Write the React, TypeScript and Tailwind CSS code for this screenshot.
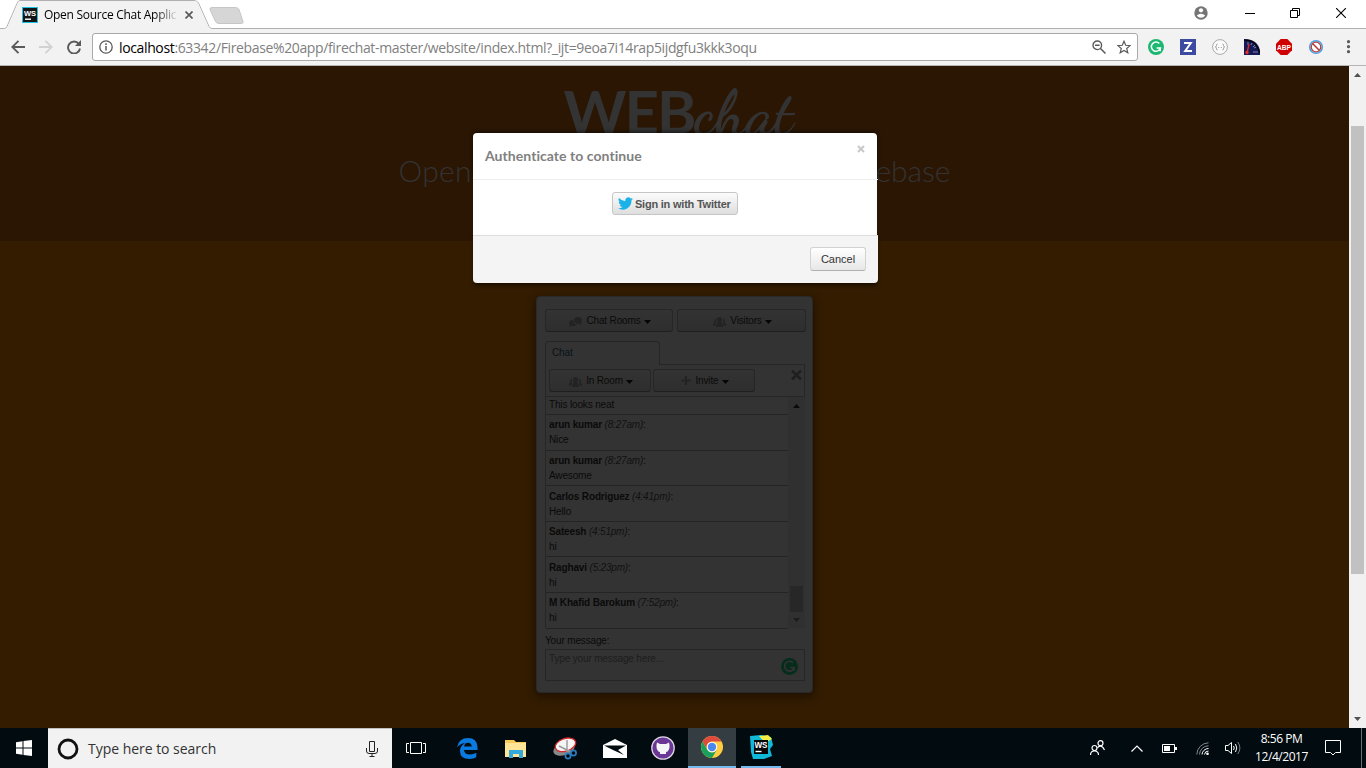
import type { ReactNode } from "react";

const UI = "font-['Open_Sans','Noto_Sans',sans-serif]";
const ARIAL = "font-['Liberation_Sans',Arial,sans-serif]";

function WebStormTab() {
  return (
    <svg width="16" height="16" viewBox="0 0 16 16">
      <rect width="16" height="16" fill="#1fc1e0" />
      <rect x="1" y="1" width="14" height="14" fill="#141414" />
      <text x="8" y="8.6" fontSize="7.5" fontWeight="700" textAnchor="middle" fill="#fff" fontFamily="Liberation Sans">WS</text>
      <rect x="3" y="11.5" width="6" height="1.4" fill="#fff" />
    </svg>
  );
}

function Grammarly({ size, bg, fg }: { size: number; bg: string; fg: string }) {
  return (
    <svg width={size} height={size} viewBox="0 0 16 16">
      <circle cx="8" cy="8" r="8" fill={bg} />
      <path d="M11.3 4.5A4.6 4.6 0 1 0 12.4 9H8.6M12.2 8.8v3.4" fill="none" stroke={fg} strokeWidth="1.5" />
    </svg>
  );
}

function TitleBar() {
  return (
    <header className="relative flex h-[29px] shrink-0 bg-white">
      <svg className="absolute left-0 top-0" width="1366" height="30" viewBox="0 0 1366 30">
        <path d="M0 28.5H4.5Q6 28.5 7 26.5L17 3.5Q18.200 .5 20 .5H194Q197 .5 198.500 3L209 26.500Q210 28.500 212 28.500H1366" fill="none" stroke="#b0b0b0" />
        <path d="M5 29.500Q7 28.500 7.500 27L17.500 4Q18.500 1 20 1H194Q197 1 198 3.500L208.500 27Q210 29.500 211 29.500Z" fill="#f2f2f2" />
        <path d="M212 7.500H235.500Q238 7.500 239 9.500L243 21.500Q243.500 23.500 241.500 23.500H219Q216.500 23.500 215.500 21.500L210 9.500Q209.500 7.500 212 7.500Z" fill="#d6d6d6" stroke="#c6c6c6" />
      </svg>
      <div className="relative flex w-[210px] items-center pl-[22px] pt-px">
        <WebStormTab />
        <span className={`${UI} ml-[6px] w-[134px] whitespace-nowrap bg-linear-to-r from-black from-80% to-[#f2f2f2] bg-clip-text text-[12px] tracking-[-0.28px] text-transparent`}>
          Open Source Chat Applic
        </span>
        <svg className="ml-[7px]" width="8" height="8" viewBox="0 0 8 8"><path d="M.5 .5l7 7M7.500 .5l-7 7" stroke="#5a5a5a" strokeWidth="1.700" /></svg>
      </div>
      <div className="relative ml-auto flex items-center pr-[20px]">
        <svg className="mb-[3px] mr-[37px]" width="14" height="14" viewBox="0 0 14 14">
          <circle cx="7" cy="7" r="6.700" fill="#757575" />
          <circle cx="7" cy="4.300" r="2.100" fill="#fff" />
          <path d="M2.800 9.500Q4.500 7.700 7 7.700T11.200 9.500Q9.600 11.800 7 11.800T2.800 9.500Z" fill="#fff" />
        </svg>
        <svg className="mb-[3px] mr-[35px]" width="10" height="10"><path d="M0 5.500h10" stroke="#000" /></svg>
        <svg className="mb-[3px] mr-[36px]" width="10" height="10"><path d="M.5 2.500h7v7h-7zM2.500 2V.5h7v7H8" fill="none" stroke="#000" /></svg>
        <svg className="mb-[3px]" width="10" height="10"><path d="M0 0l10 10M10 0L0 10" stroke="#000" strokeWidth="1.100" /></svg>
      </div>
    </header>
  );
}

function Toolbar() {
  return (
    <div className="flex h-[37px] shrink-0 items-center border-b border-[#b5b5b5] bg-[#f2f2f2]">
      <svg className="ml-[11px]" width="14" height="14" viewBox="0 0 14 14"><path d="M7.500 .8L1.300 7l6.200 6.200M1.500 7H14" fill="none" stroke="#5a5a5a" strokeWidth="1.900" /></svg>
      <svg className="ml-[14px]" width="14" height="14" viewBox="0 0 14 14"><path d="M6.500 .8L12.700 7l-6.200 6.200M12.500 7H0" fill="none" stroke="#d2d2d2" strokeWidth="1.900" /></svg>
      <svg className="ml-[14px]" width="14" height="14" viewBox="0 0 14 14"><path d="M11.800 3.800A6 6 0 1 0 13 8.500" fill="none" stroke="#5a5a5a" strokeWidth="1.900" /><path d="M14 0v6H8z" fill="#5a5a5a" /></svg>
      <div className="ml-[11px] flex h-[28px] w-[1046px] items-center rounded-[3px] border border-[#a9a9a9] bg-white pl-[6px]">
        <svg width="14" height="14" viewBox="0 0 14 14"><circle cx="7" cy="7" r="6.200" fill="none" stroke="#5a5a5a" strokeWidth="1.300" /><path d="M7 6v4.500M7 3.300v1.600" stroke="#5a5a5a" strokeWidth="1.500" /></svg>
        <span className={`${UI} ml-[6px] whitespace-nowrap text-[14px] tracking-[-0.365px] text-[#808080]`}>
          <span className="text-black">localhost</span>:63342/Firebase%20app/firechat-master/website/index.html?_ijt=9eoa7i14rap5ijdgfu3kkk3oqu
        </span>
        <svg className="ml-auto" width="14" height="14" viewBox="0 0 14 14"><circle cx="5.300" cy="5.300" r="4.300" fill="none" stroke="#5a5a5a" strokeWidth="1.400" /><path d="M3 5.300h4.600M8.500 8.500l5 5" stroke="#5a5a5a" strokeWidth="1.500" /></svg>
        <svg className="ml-[11px] mr-[6px]" width="14" height="14" viewBox="0 0 14 14"><path d="M7 1.200l1.700 4.100 4.400.3-3.400 2.900 1.100 4.300L7 10.500l-3.800 2.300 1.100-4.300L.9 5.600l4.400-.3z" fill="none" stroke="#5a5a5a" strokeWidth="1.200" /></svg>
      </div>
      <div className="ml-[10px] flex items-center gap-[16px]">
        <Grammarly size={16} bg="#1cb872" fg="#fff" />
        <svg width="16" height="16"><rect width="16" height="16" fill="#3c4aa0" /><path d="M4 4h6.800L5.200 12H12" fill="none" stroke="#fff" strokeWidth="2" /></svg>
        <svg width="16" height="16"><circle cx="8" cy="8" r="7.400" fill="#fafafa" stroke="#aaa" strokeWidth="1" /><path d="M5.500 5Q4.500 5 4.500 6.300T3.400 8Q4.500 8.200 4.500 9.700T5.500 11M10.500 5Q11.500 5 11.500 6.300T12.600 8Q11.500 8.200 11.500 9.700T10.500 11M6.200 8.500h1M8.800 8.500h1" fill="none" stroke="#999" /></svg>
        <svg width="16" height="16"><path d="M0 0Q14 0 16 12V16H0z" fill="#171b55" /><path d="M0 1Q13 1 15.500 14" fill="none" stroke="#050510" strokeWidth="1.500" /><path d="M4 3v3M8 4L7 6M12 8l-2 1M11 6l-2 2M9 13h5" stroke="#7c83b8" /><path d="M5 5L3 14" stroke="#e02a24" strokeWidth="1.400" /><circle cx="3" cy="13.500" r="1.700" fill="#f02a24" /></svg>
        <svg width="16" height="16"><path d="M4.700 0h6.600L16 4.700v6.600L11.300 16H4.700L0 11.300V4.700z" fill="#d00000" /><text x="8" y="11" fontSize="8" fontWeight="700" textAnchor="middle" textLength="14" lengthAdjust="spacingAndGlyphs" fill="#fff" fontFamily="Liberation Sans">ABP</text></svg>
        <svg width="16" height="16"><circle cx="8" cy="8" r="6.300" fill="#fff" stroke="#49a1e8" strokeWidth="1.600" /><circle cx="8" cy="8" r="4.800" fill="none" stroke="#b93b3b" strokeWidth="1.300" /><path d="M4.700 4.700l6.600 6.600" stroke="#b93b3b" strokeWidth="1.600" /></svg>
        <svg width="16" height="16"><g fill="#5a5a5a"><circle cx="8.500" cy="2.700" r="1.600" /><circle cx="8.500" cy="7.700" r="1.600" /><circle cx="8.500" cy="12.700" r="1.600" /></g></svg>
      </div>
    </div>
  );
}

const Caret = () => <svg className="ml-[3px] mt-[2px]" width="7" height="4"><path d="M0 0h7L3.500 4z" fill="#050505" /></svg>;
const Group = () => (
  <svg className="mr-[4px] mt-[2px]" width="13" height="10" viewBox="0 0 13 10">
    <path d="M4 2.500q0-2.500 2.500-2.500T9 2.500q0 2-1 3 2 .5 2 4.500H3q0-4 2-4.500-1-1-1-3zM0 9V6.500l1.500-1q-1-3 1.500-4v3.500q0 1.500-1 4zM13 9V6.500l-1.500-1q1-3-1.500-4v3.500q0 1.500 1 4z" fill="#232323" />
  </svg>
);
const Bubbles = () => (
  <svg className="mr-[4px] mt-[2px]" width="13" height="10" viewBox="0 0 13 10">
    <path d="M5 3Q5.500 0 9 0t4 3.500q0 2-1 2.500v2l-2-1Q5 7 5 3zM0 6q0-3 4-3 0 4 4 5-2 1.500-5 1L0 10l.7-1.700Q0 7.500 0 6z" fill="#232323" />
  </svg>
);
const Plus = () => <svg className="mr-[4px]" width="10" height="9"><path d="M5 0v9M.5 4.500h9" stroke="#232323" strokeWidth="2.200" /></svg>;

function DarkButton({ className, icon, children }: { className: string; icon: ReactNode; children: ReactNode }) {
  return (
    <button className={`${className} flex h-[23px] shrink-0 items-center justify-center rounded-[3px] border border-[#262626] border-b-[#1f1f1f] bg-linear-to-b from-[#333] to-[#2e2e2e] pl-[2px]`}>
      {icon}
      <span>{children}</span>
      <Caret />
    </button>
  );
}

const messages = [
  { name: "arun kumar", time: "(8:27am)", text: "Nice", box: "h-[36px] pt-[2px]" },
  { name: "arun kumar", time: "(8:27am)", text: "Awesome", box: "h-[35px] pt-[2px]" },
  { name: "Carlos Rodriguez", time: "(4:41pm)", text: "Hello", box: "h-[36px] pt-[3px]" },
  { name: "Sateesh", time: "(4:51pm)", text: "hi", box: "h-[35px] pt-[2px]" },
  { name: "Raghavi", time: "(5:23pm)", text: "hi", box: "h-[36px] pt-[3px]" },
  { name: "M Khafid Barokum", time: "(7:52pm)", text: "hi", box: "h-[36px] pt-[2px]" },
];

function ChatPanel() {
  return (
    <section className={`${ARIAL} mx-auto mt-[55px] flex h-[397px] w-[277px] flex-col rounded-[4px] border border-[#292929] bg-[#333] pl-[8px] pt-[12px] text-[10px] leading-[15px] tracking-[-0.15px] text-[#0a0a0a] shadow-[0_3px_8px_1px_rgba(0,0,0,.4)]`}>
      <div className="flex h-[24px] shrink-0 gap-[4px]">
        <DarkButton className="w-[128px]" icon={<Bubbles />}>Chat Rooms</DarkButton>
        <DarkButton className="w-[129px]" icon={<Group />}>Visitors</DarkButton>
      </div>
      <div className="z-10 -mb-px mt-[8px] flex h-[24px] w-[115px] shrink-0 items-center rounded-t-[4px] border border-b-0 border-[#262626] bg-[#333] pl-[6px] pb-[2px] text-[#07121a]">Chat</div>
      <div className="flex h-[33px] w-[260px] shrink-0 gap-[2px] border border-[#262626] pl-[3px] pt-[4px]">
        <DarkButton className="w-[102px]" icon={<Group />}>In Room</DarkButton>
        <DarkButton className="w-[102px]" icon={<Plus />}>Invite</DarkButton>
        <svg className="ml-auto mr-[2px] mt-px" width="11" height="10"><path d="M1 .5l9 9M10 .5l-9 9" stroke="#1f1f1f" strokeWidth="2.500" /></svg>
      </div>
      <div className="flex h-[231px] w-[260px] shrink-0">
        <div className="w-[243px] border-l border-[#262626]">
          <div className="h-[18px] border-b border-[#242424] pl-[3px]"><span>This looks neat</span></div>
          {messages.map((m, i) => (
            <div key={i} className={`${m.box} border-b border-[#242424] pl-[3px]`}>
              <div className="whitespace-nowrap"><b>{m.name}</b> <i className="tracking-[-0.2px] text-[#111]">{m.time}</i>:</div>
              <div>{m.text}</div>
            </div>
          ))}
        </div>
        <div className="flex w-[17px] flex-col items-center bg-[#303030]">
          <svg className="mt-[7px]" width="7" height="4"><path d="M0 4h7L3.500 0z" fill="#0a0a0a" /></svg>
          <div className="mt-auto h-[26px] w-[13px] bg-[#272727]" />
          <svg className="mb-[6px] mt-[6px]" width="7" height="4"><path d="M0 0h7L3.500 4z" fill="#1c1c1c" /></svg>
        </div>
      </div>
      <div className="mt-[5px] h-[16px] shrink-0">Your message:</div>
      <div className="flex h-[32px] w-[260px] shrink-0 justify-between border border-[#262626] pl-[3px] pr-[6px] pt-px">
        <span className="text-[#1d1d1d]">Type your message here...</span>
        <div className="mt-[7px]"><Grammarly size={17} bg="#062d1b" fg="#333" /></div>
      </div>
    </section>
  );
}

function AuthDialog() {
  return (
    <div role="dialog" className="absolute left-[473px] top-[67px] flex h-[150px] w-[405px] flex-col overflow-visible rounded-[4px]">
      <div className="flex h-[46px] w-[404px] justify-between rounded-t-[4px] bg-white pl-[12px] pr-[12px] shadow-[0_-1px_4px_rgba(0,0,0,.6)]">
        <h3 className="pt-[13px] font-['Lato',sans-serif] text-[14px] font-bold leading-[20px] tracking-[0.05px] text-[#808080]">Authenticate to continue</h3>
        <svg className="mt-[12px]" width="8" height="8"><path d="M1 1l6 6M7 1l-6 6" stroke="#c8c8c8" strokeWidth="2" /></svg>
      </div>
      <div className="h-px bg-[#eee]" />
      <div className="flex h-[55px] w-[404px] justify-center bg-white pt-[12px]">
        <button className={`${ARIAL} flex h-[23px] w-[126px] items-center rounded-[3px] border border-[#c6c6c6] bg-linear-to-b from-[#fcfcfc] to-[#dedede] pl-[5px] text-[11px] font-bold tracking-[-0.22px] text-[#555]`}>
          <svg className="mr-[2px] shrink-0" width="15" height="13" viewBox="0 0 24 20"><path d="M23.950 2.600a10 10 0 0 1-2.800.8A5 5 0 0 0 23.300.7a10 10 0 0 1-3.100 1.200 4.900 4.900 0 0 0-8.400 4.500A14 14 0 0 1 1.700 1.200a4.900 4.900 0 0 0 1.500 6.600 4.900 4.900 0 0 1-2.200-.6 4.900 4.900 0 0 0 3.900 4.900 5 5 0 0 1-2.200.1 4.900 4.900 0 0 0 4.600 3.400A9.900 9.900 0 0 1 0 17.600 14 14 0 0 0 21.500 5.100a10 10 0 0 0 2.450-2.500z" fill="#1bb2e9" /></svg>
          <span className="whitespace-nowrap pt-px">Sign in with Twitter</span>
        </button>
      </div>
      <div className="relative flex h-[48px] justify-end rounded-b-[4px] border-t border-[#ddd] bg-[#f4f4f4] pr-[12px] pt-[11px] shadow-[0_3px_4px_-1px_rgba(0,0,0,.6)]">
        <button className={`${ARIAL} h-[24px] w-[56px] rounded-[3px] border border-[#d2d2d2] border-b-[#b0b0b0] bg-linear-to-b from-white to-[#e7e7e7] text-[11px] text-[#333]`}>Cancel</button>
      </div>
    </div>
  );
}

function Page() {
  return (
    <main className="relative flex h-[662px] shrink-0">
      <div className="w-[1349px] bg-[#331c00]">
        <div className="flex h-[175px] flex-col items-center bg-[#2b1604] text-[#333]">
          <h1 className="flex h-[88px] w-[222px] items-start whitespace-nowrap">
            <span className="mt-[9px] font-['Lato',sans-serif] text-[60px] font-bold leading-[72px] tracking-[-2px]">WEB</span>
            <span className="mt-[11px] font-['Dancing_Script','Liberation_Serif',serif] text-[62px] font-bold leading-[72px] tracking-[0.5px]">chat</span>
          </h1>
          <div className="flex w-[552px] justify-between font-['Lato',sans-serif] text-[30px] font-light leading-[32px]">
            <span className="tracking-[0.3px]">Open-</span>
            <span>Firebase</span>
          </div>
        </div>
        <ChatPanel />
      </div>
      <div className="flex w-[17px] flex-col items-center bg-[#f1f1f1]">
        <svg className="mt-[7px]" width="7" height="4"><path d="M0 4h7L3.500 0z" fill="#505050" /></svg>
        <div className="mt-[49px] h-[448px] w-[13px] bg-[#c1c1c1]" />
        <svg className="mb-[7px] mt-auto" width="7" height="4"><path d="M0 0h7L3.500 4z" fill="#505050" /></svg>
      </div>
      <AuthDialog />
    </main>
  );
}

const slot = "flex h-[40px] w-[49px] items-center justify-center";

function Taskbar() {
  return (
    <footer className={`${UI} flex h-[40px] shrink-0 bg-[#010b10] text-white`}>
      <div className="flex w-[48px] items-center justify-center">
        <svg width="16" height="16"><path d="M0 2.200L6.500 1.300V7.500H0zM7.500 1.100L16 0V7.500H7.500zM0 8.500H6.500V14.700L0 13.800zM7.500 8.500H16V16L7.500 14.900z" fill="#fff" /></svg>
      </div>
      <div className="flex w-[344px] items-center border-t border-[#c0c0c0] bg-[#f2f2f2] pl-[9px] pr-[14px]">
        <svg width="22" height="22"><circle cx="11" cy="11" r="9" fill="none" stroke="#111" strokeWidth="2.800" /></svg>
        <span className="ml-[9px] text-[14px] tracking-[-0.03px] text-[#333]">Type here to search</span>
        <svg className="ml-auto" width="12" height="16"><path d="M3.500 .5h5v10h-5zM.5 7v3Q.5 12.500 3 12.500H9Q11.500 12.500 11.500 10V7M6 12.500v3M3.500 15.500h5" fill="none" stroke="#222" /></svg>
      </div>
      <div className="flex">
        <div className={slot}><svg className="mr-px" width="20" height="14"><path d="M4.500 1.500h11v11h-11zM3 2.500H.5v9H3M17 2.500h2.500v9H17" fill="none" stroke="#fff" /></svg></div>
        <div className="flex w-[53px] items-center justify-center"><svg width="21" height="21" viewBox="0 0 21 21"><path d="M0 9.500Q1.500 0 11 0q9 0 9.500 9v3H7q.5 4.500 6 4.500 3.500 0 6.300-1.700v4.400Q16.500 21 12.500 21 3 21 3 13q0-5 5-8Q3 5.500 0 9.500zM7.200 8.400h7.500Q14.500 4.800 11 4.800T7.200 8.400z" fill="#0a7adf" /></svg></div>
        <div className="flex w-[43px] items-center justify-center"><svg width="22" height="19"><path d="M0 1h9l2 2h10v15H0z" fill="#f6cb57" /><path d="M0 4h21v14H0z" fill="#ffe696" /><path d="M4 11h14v8h-4v-4H8v4H4z" fill="#35a9dc" /></svg></div>
        <div className="flex w-[55px] items-center justify-center"><svg width="24" height="23"><ellipse cx="11" cy="12" rx="11" ry="6" fill="#888" transform="rotate(-18 11 12)" /><ellipse cx="12.500" cy="8" rx="10.500" ry="6.300" fill="#f5f5f5" stroke="#d2292c" strokeWidth="1.300" transform="rotate(-18 12 8)" /><path d="M14 3v12M6 9l12 6" stroke="#999" strokeWidth="1.400" /><circle cx="15" cy="19" r="2.600" fill="none" stroke="#2b7cc0" strokeWidth="1.700" /><circle cx="20.500" cy="16" r="2.600" fill="none" stroke="#2b7cc0" strokeWidth="1.700" /></svg></div>
        <div className="flex w-[45px] items-center justify-center"><svg width="24" height="19"><path d="M0 6L12 0l12 6v13H0z" fill="#fff" /><path d="M1 6.500h22L15 11l6 5-11-5z" fill="#010b10" /></svg></div>
        <div className="flex w-[51px] items-center justify-center"><svg width="24" height="24"><circle cx="12" cy="12" r="11.200" fill="#6a3796" stroke="#d9d4df" strokeWidth="1.300" /><path d="M6 6.500l3 1.500h6l3-1.500q.8 3 .5 4.500 0 5.500-6.500 5.500T5.500 11Q5.200 9.500 6 6.500zM9 16h6v2H9z" fill="#f5f5f5" /></svg></div>
        <div className="flex w-[48px] items-center justify-center border-b-2 border-[#76b9ed] bg-[#343d41]">
          <svg width="22" height="22" viewBox="0 0 22 22"><circle cx="11" cy="11" r="11" fill="#ffcd40" /><path d="M1.500 5.500A11 11 0 0 1 20.500 5.500H11A5.500 5.500 0 0 0 6.200 13.700z" fill="#dd4b3e" /><path d="M1.500 5.500A11 11 0 0 0 11 22L15.800 13.700A5.500 5.500 0 0 1 6.200 13.700z" fill="#1aa05d" /><circle cx="11" cy="11" r="5.200" fill="#fff" /><circle cx="11" cy="11" r="4.200" fill="#4a87ee" /></svg>
        </div>
        <div className="flex w-[5px]" />
        <div className="flex w-[40px] items-center justify-center border-b-2 border-[#76b9ed]"><svg width="24" height="24"><path d="M1 1l11-1 10 2 2 8-3 4 2 7-8 3H4L2 17z" fill="#10b9d8" /><path d="M10 1l9-1 4 4-7 4z" fill="#f5ee42" /><path d="M5 5h14v14H5z" fill="#080808" /><text x="12" y="12.500" fontSize="9" fontWeight="700" textAnchor="middle" textLength="13" lengthAdjust="spacingAndGlyphs" fill="#fff" fontFamily="Liberation Sans">WS</text><path d="M6.500 16.500h6" stroke="#fff" strokeWidth="1.400" /></svg></div>
      </div>
      <div className="ml-auto flex items-center">
        <svg className="mr-[26px]" width="15" height="16"><circle cx="4.500" cy="8" r="2.500" fill="none" stroke="#fff" strokeWidth="1.200" /><path d="M.5 15Q.5 11 4.500 11T8.500 15" fill="none" stroke="#fff" strokeWidth="1.200" /><circle cx="10.500" cy="3.200" r="2.500" fill="none" stroke="#fff" strokeWidth="1.200" /><path d="M7.500 8Q8.500 6.200 10.500 6.200T14.500 10" fill="none" stroke="#fff" strokeWidth="1.200" /></svg>
        <svg className="mr-[19px]" width="12" height="7"><path d="M.5 6.500L6 1l5.500 5.500" fill="none" stroke="#fff" strokeWidth="1.200" /></svg>
        <svg className="mr-[19px]" width="15" height="9"><path d="M.5 .5h12v8H.5z" fill="none" stroke="#fff" /><path d="M2 2h6v5H2zM13 3h2v3h-2z" fill="#fff" /></svg>
        <svg className="mr-[16px]" width="13" height="13"><g fill="none"><path d="M.8 12.500A12 12 0 0 1 12.500 .8M3.500 12.500A9 9 0 0 1 12.500 3.800" stroke="#838a8c" /><path d="M6 12.500A6.500 6.500 0 0 1 12.500 6.500M8.500 12.500A4 4 0 0 1 12.500 9" stroke="#fff" /></g><circle cx="11.500" cy="11.800" r="1.300" fill="#fff" /></svg>
        <svg className="mr-[14px]" width="16" height="14"><g fill="none" stroke="#fff"><path d="M.5 4.500H3L6.500 1.500v11L3 9.500H.5zM8.500 5Q10 7 8.500 9M10.500 3Q13 7 10.500 11" /><path d="M12.800 1Q17 7 12.800 13" stroke="#777e80" /></g></svg>
        <div className="flex w-[53px] flex-col items-center whitespace-nowrap text-[12px] leading-[18px] tracking-[-0.45px]"><span>8:56 PM</span><span>12/4/2017</span></div>
        <svg className="ml-[17px] mr-[20px]" width="16" height="16"><path d="M.5 .5h15v12h-5L8 15l-2.500-2.500h-5z" fill="none" stroke="#fff" /></svg>
        <div className="mr-[4px] h-full w-px bg-[#657074]" />
      </div>
    </footer>
  );
}

export default function App() {
  return (
    <div className="flex h-[768px] w-[1366px] flex-col overflow-hidden bg-white">
      <TitleBar />
      <Toolbar />
      <Page />
      <Taskbar />
    </div>
  );
}
